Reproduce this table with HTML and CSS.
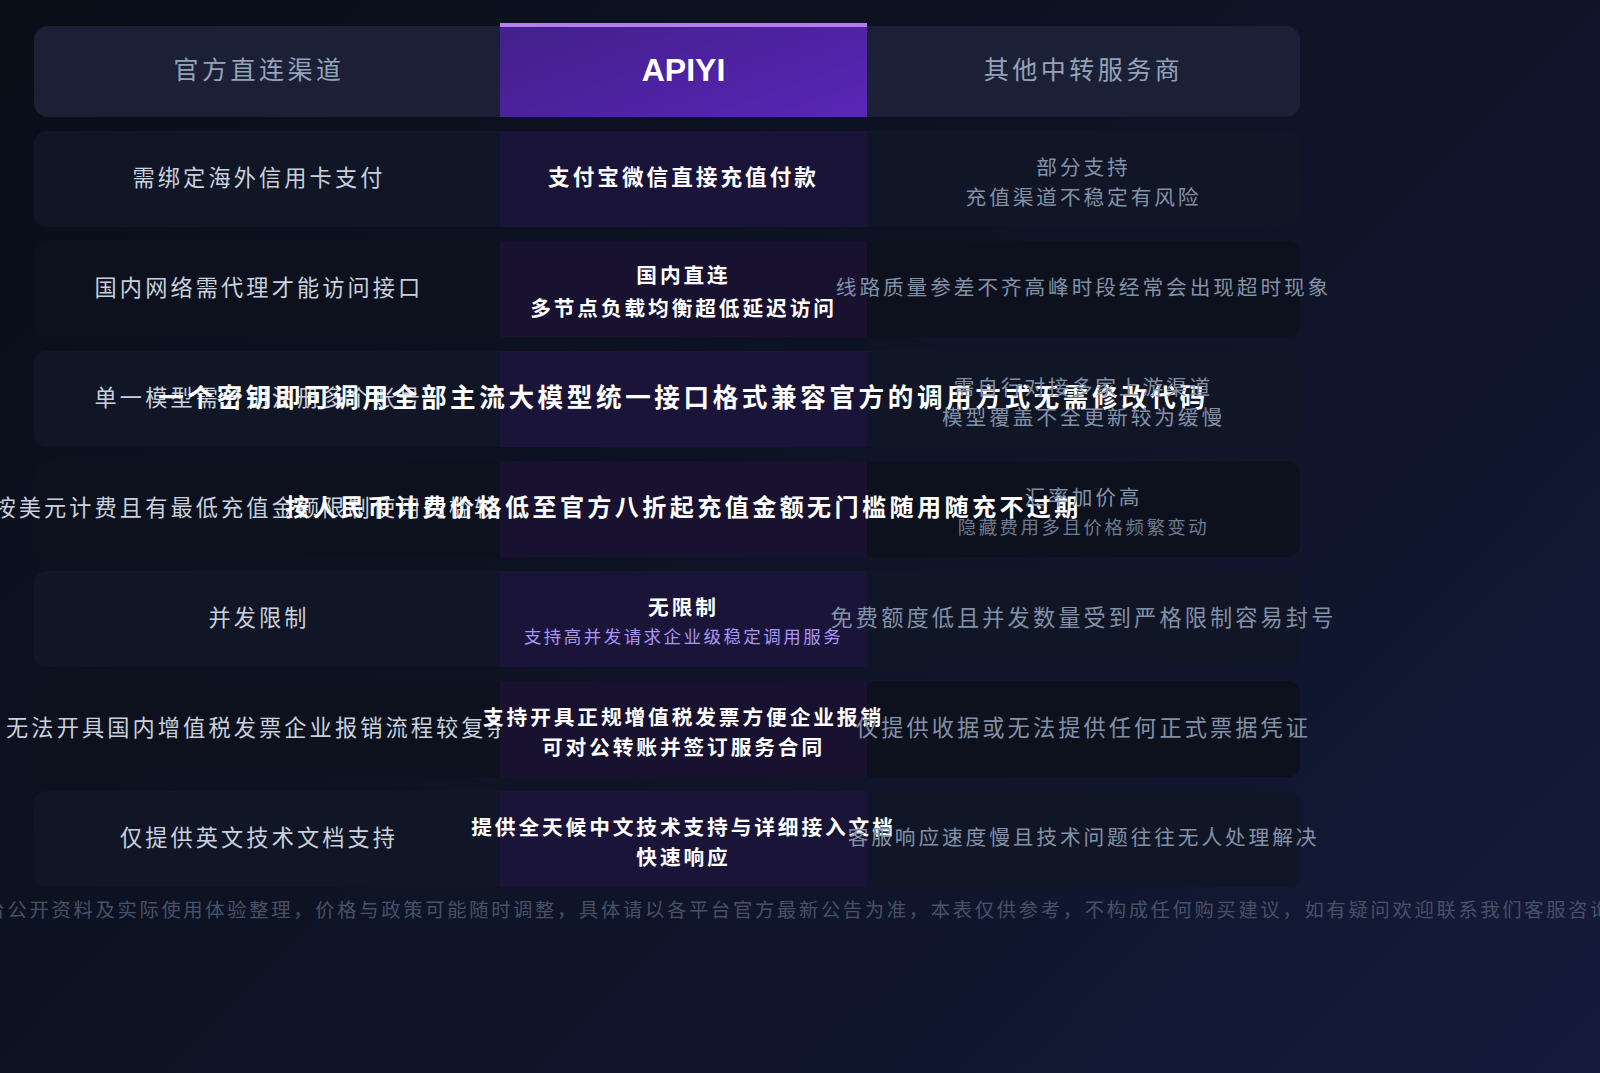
FILE: index.html
```html
<!DOCTYPE html>
<html lang="zh-CN">
<head>
<meta charset="utf-8">
<title>APIYI 对比</title>
<link rel="stylesheet" href="styles.css">
</head>
<body>
<div class="page">
  <div class="table">
    <div class="row head">
      <div class="cell cell-l"><span class="t one t-xl">官方直连渠道</span></div>
      <div class="cell cell-m"><span class="brand">APIYI</span></div>
      <div class="cell cell-r"><span class="t one t-xl">其他中转服务商</span></div>
    </div>

    <div class="row odd">
      <div class="cell cell-l"><span class="t one t-lg">需绑定海外信用卡支付</span></div>
      <div class="cell cell-m"><span class="t one t-m2">支付宝微信直接充值付款</span></div>
      <div class="cell cell-r"><div class="stack"><span class="t t-md">部分支持</span><span class="t t-md">充值渠道不稳定有风险</span></div></div>
    </div>

    <div class="row even">
      <div class="cell cell-l"><span class="t one t-lg">国内网络需代理才能访问接口</span></div>
      <div class="cell cell-m"><div class="stack stack-wide"><span class="t t-md">国内直连</span><span class="t t-md">多节点负载均衡超低延迟访问</span></div></div>
      <div class="cell cell-r"><span class="t one t-md">线路质量参差不齐高峰时段经常会出现超时现象</span></div>
    </div>

    <div class="row odd">
      <div class="cell cell-l"><span class="t one t-lg">单一模型需分别注册多个账号</span></div>
      <div class="cell cell-m"><span class="t one t-big1">一个密钥即可调用全部主流大模型统一接口格式兼容官方的调用方式无需修改代码</span></div>
      <div class="cell cell-r"><div class="stack"><span class="t t-md">需自行对接多家上游渠道</span><span class="t t-md">模型覆盖不全更新较为缓慢</span></div></div>
    </div>

    <div class="row even">
      <div class="cell cell-l"><span class="t one t-lg">按美元计费且有最低充值金额限制使用门槛较高</span></div>
      <div class="cell cell-m"><span class="t one t-big2">按人民币计费价格低至官方八折起充值金额无门槛随用随充不过期</span></div>
      <div class="cell cell-r"><div class="stack"><span class="t t-md">汇率加价高</span><span class="t t-sm dim">隐藏费用多且价格频繁变动</span></div></div>
    </div>

    <div class="row odd">
      <div class="cell cell-l"><span class="t one t-lg">并发限制</span></div>
      <div class="cell cell-m"><div class="stack"><span class="t t-md">无限制</span><span class="t t-xs accent">支持高并发请求企业级稳定调用服务</span></div></div>
      <div class="cell cell-r"><span class="t one t-lg">免费额度低且并发数量受到严格限制容易封号</span></div>
    </div>

    <div class="row even">
      <div class="cell cell-l"><span class="t one t-lg">无法开具国内增值税发票企业报销流程较复杂</span></div>
      <div class="cell cell-m"><div class="stack"><span class="t t-md">支持开具正规增值税发票方便企业报销</span><span class="t t-md">可对公转账并签订服务合同</span></div></div>
      <div class="cell cell-r"><span class="t one t-lg">仅提供收据或无法提供任何正式票据凭证</span></div>
    </div>

    <div class="row odd">
      <div class="cell cell-l"><span class="t one t-lg">仅提供英文技术文档支持</span></div>
      <div class="cell cell-m"><div class="stack"><span class="t t-md">提供全天候中文技术支持与详细接入文档</span><span class="t t-md">快速响应</span></div></div>
      <div class="cell cell-r"><span class="t one t-md">客服响应速度慢且技术问题往往无人处理解决</span></div>
    </div>
  </div>

  <div class="note"><span class="t t-note">注：以上对比信息基于各平台公开资料及实际使用体验整理，价格与政策可能随时调整，具体请以各平台官方最新公告为准，本表仅供参考，不构成任何购买建议，如有疑问欢迎联系我们客服咨询</span></div>
</div>
</body>
</html>
```

FILE: styles.css
```css
* {
  box-sizing: border-box;
}

html,
body {
  margin: 0;
  padding: 0;
}

body {
  width: 1600px;
  height: 1073px;
  overflow: hidden;
  background: linear-gradient(135deg, #0a0e19 0%, #0e1324 45%, #111630 75%, #161b3c 100%);
  font-family: "Noto Sans CJK SC", "Noto Sans", sans-serif;
}

.page {
  width: 1334px;
  padding: 25.5px 34px 0;
}

.table {
  display: flex;
  flex-direction: column;
  gap: 14px;
}

.row {
  display: grid;
  grid-template-columns: minmax(0, 466fr) minmax(0, 367fr) minmax(0, 433fr);
  height: 96px;
  border-radius: 12px;
}

.row.head {
  height: 91px;
  background: #1c2036;
  border-radius: 14px;
}

.row.odd {
  background: #111627;
}

.row.even {
  background: #0d111e;
}

.cell {
  display: flex;
  align-items: center;
  justify-content: center;
  min-width: 0;
}

.cell-l {
  padding-right: 16px;
  color: #c9d1de;
}

.cell-m {
  color: #ffffff;
  font-weight: 700;
}

.cell-r {
  color: #8391a6;
}

.head .cell-l,
.head .cell-r {
  color: #94a3b8;
}

.odd .cell-m {
  background: #1b1439;
}

.even .cell-m {
  background: #18112f;
}

.head .cell-m {
  margin-top: -3px;
  padding-bottom: 3px;
  border-top: 4px solid #b47df2;
  background: linear-gradient(160deg, #43208a 0%, #4d22a0 50%, #5a26b8 100%);
}

.brand {
  font-family: "Liberation Sans", Arial, sans-serif;
  font-size: 32px;
  font-weight: 700;
  color: #ffffff;
  letter-spacing: 0;
}

.t {
  white-space: nowrap;
  letter-spacing: 0.14em;
}

.one {
  margin-bottom: 6px;
}

.stack {
  display: flex;
  flex-direction: column;
  align-items: center;
  line-height: 30px;
  margin-top: 4px;
}

.stack-wide {
  line-height: 33px;
}

.t-xl { font-size: 25px; }
.t-lg { font-size: 22.2px; }
.t-m2 { font-size: 21.6px; }
.t-md { font-size: 20.7px; }
.t-sm { font-size: 18.4px; }
.t-xs { font-size: 17.5px; }
.t-big1 { font-size: 25.6px; }
.t-big2 { font-size: 24.1px; }

.dim {
  color: #6d7a90;
}

.accent {
  color: #a995f2;
  font-weight: 400;
}

.note {
  display: flex;
  justify-content: center;
  margin-top: 8px;
  color: #465266;
}

.t-note {
  font-size: 19.3px;
}
```
